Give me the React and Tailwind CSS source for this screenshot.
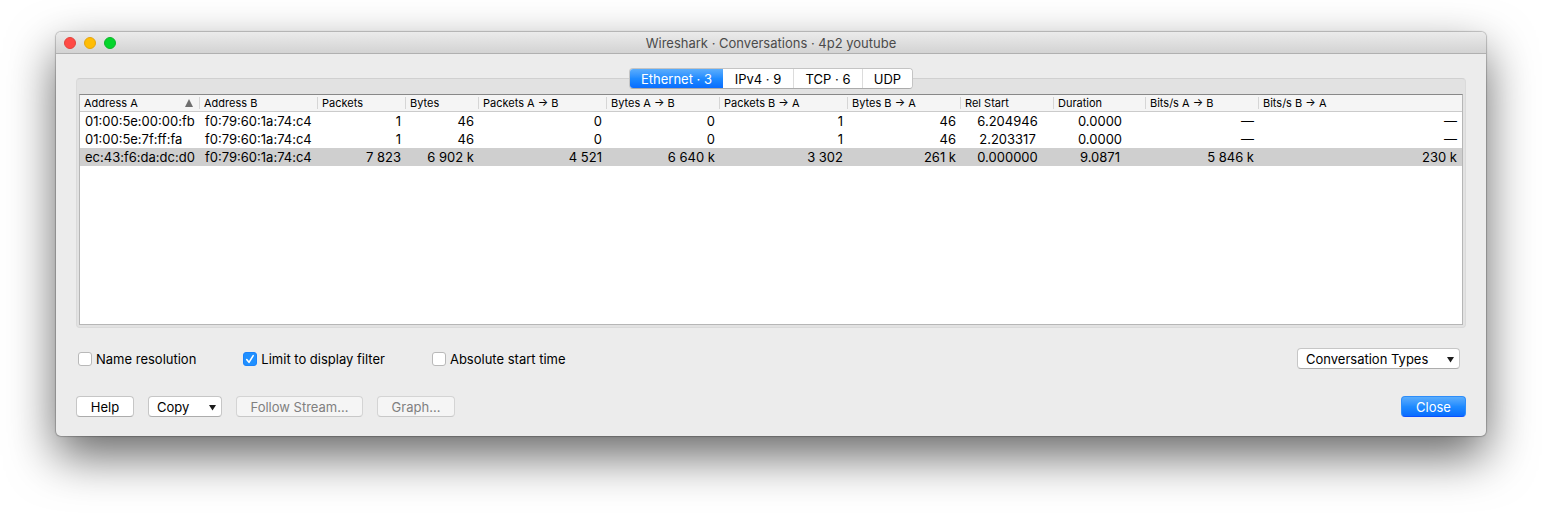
import React, { useState } from "react";

const COLUMNS = [
  { label: "Address A", width: "w-[120px]", align: "text-left" },
  { label: "Address B", width: "w-[118px]", align: "text-left" },
  { label: "Packets", width: "w-[88px]", align: "text-right" },
  { label: "Bytes", width: "w-[73px]", align: "text-right" },
  { label: "Packets A → B", width: "w-[128px]", align: "text-right" },
  { label: "Bytes A → B", width: "w-[113px]", align: "text-right" },
  { label: "Packets B → A", width: "w-[128px]", align: "text-right" },
  { label: "Bytes B → A", width: "w-[113px]", align: "text-right" },
  { label: "Rel Start", width: "w-[93px]", align: "text-center" },
  { label: "Duration", width: "w-[92px]", align: "text-center" },
  { label: "Bits/s A → B", width: "w-[113px]", align: "text-right" },
  { label: "Bits/s B → A", width: "", align: "text-right" },
];

const ROWS = [
  ["01:00:5e:00:00:fb", "f0:79:60:1a:74:c4", "1", "46", "0", "0", "1", "46", "6.204946", "0.0000", "—", "—"],
  ["01:00:5e:7f:ff:fa", "f0:79:60:1a:74:c4", "1", "46", "0", "0", "1", "46", "2.203317", "0.0000", "—", "—"],
  ["ec:43:f6:da:dc:d0", "f0:79:60:1a:74:c4", "7 823", "6 902 k", "4 521", "6 640 k", "3 302", "261 k", "0.000000", "9.0871", "5 846 k", "230 k"],
];

const TABS = [
  { label: "Ethernet · 3", width: "w-[93px]" },
  { label: "IPv4 · 9", width: "w-[70px]" },
  { label: "TCP · 6", width: "w-[69px]" },
  { label: "UDP", width: "w-[50px]" },
];

const BLUE = "bg-linear-to-b from-[#5aadfc] via-[#1f8bff] to-[#0a6cff] text-white";

function Tabs() {
  const [active, setActive] = useState(0);
  return (
    <div
      role="tablist"
      className="relative z-10 -mb-[11px] flex h-[21px] self-center overflow-hidden rounded-[4px] border border-[#c4c4c4] border-b-[#ababab] bg-white"
    >
      {TABS.map((tab, i) => (
        <button
          key={tab.label}
          role="tab"
          aria-selected={i === active}
          onClick={() => setActive(i)}
          className={`${tab.width} whitespace-nowrap ${i === active ? BLUE : "bg-white"} ${
            i > active + 1 ? "border-l border-[#dcdcdc]" : ""
          }`}
        >
          {tab.label}
        </button>
      ))}
    </div>
  );
}

function Conversations() {
  return (
    <table className="w-full table-fixed border-separate border-spacing-0">
      <thead>
        <tr className="h-[17px] bg-[#f5f5f5] text-[11px] leading-[14px]">
          {COLUMNS.map((c, i) => (
            <th key={c.label} scope="col" className={`${c.width} border-b border-[#cbcbcb] p-0 text-left font-normal`}>
              <div
                className={`flex h-3 items-center justify-between pl-1 ${
                  i < COLUMNS.length - 1 ? "border-r border-[#d6d6d6]" : ""
                }`}
              >
                <span className="whitespace-nowrap">{c.label}</span>
                {i === 0 && (
                  <svg className="mr-1.5 size-2" viewBox="0 0 8 8" fill="#6f6f6f" aria-hidden="true">
                    <path d="M4 0 8 8H0z" />
                  </svg>
                )}
              </div>
            </th>
          ))}
        </tr>
      </thead>
      <tbody>
        {ROWS.map((row, r) => (
          <tr key={row[0]} className={`h-[18px] leading-[18px] ${r === 2 ? "bg-[#cfcfcf]" : ""}`}>
            {row.map((cell, i) => (
              <td key={COLUMNS[i].label} className={`${COLUMNS[i].align} px-[5px] py-0 whitespace-nowrap`}>
                {cell}
              </td>
            ))}
          </tr>
        ))}
      </tbody>
    </table>
  );
}

function Check({ label, defaultChecked }) {
  return (
    <label className="flex items-center gap-1">
      <span className="grid">
        <input
          type="checkbox"
          defaultChecked={defaultChecked}
          className="peer col-start-1 row-start-1 size-3.5 appearance-none rounded-[3px] border border-[#b9b9b9] bg-white checked:border-[#1a82fb] checked:bg-[#2090ff]"
        />
        <svg
          viewBox="0 0 14 14"
          className="pointer-events-none invisible col-start-1 row-start-1 size-3.5 peer-checked:visible"
          fill="none"
          stroke="white"
          strokeWidth="1.6"
          strokeLinecap="round"
          strokeLinejoin="round"
          aria-hidden="true"
        >
          <path d="M3.7 7.6 6 10.3 10.2 3.6" />
        </svg>
      </span>
      {label}
    </label>
  );
}

function DropDown({ label, width }) {
  return (
    <span className={`grid items-center ${width}`}>
      <select
        aria-label={label}
        className="col-start-1 row-start-1 h-[21px] w-full appearance-none rounded-[4px] border border-[#c6c6c6] border-b-[#acacac] bg-white pl-2 leading-[18px]"
      >
        <option>{label}</option>
      </select>
      <svg
        viewBox="0 0 7 6"
        className="pointer-events-none col-start-1 row-start-1 mt-0.5 mr-1.5 h-1.5 w-[7px] justify-self-end"
        fill="#1c1c1c"
        aria-hidden="true"
      >
        <path d="M0 0H7L3.5 5.6z" />
      </svg>
    </span>
  );
}

function PushButton({ children, width, disabled }) {
  return (
    <button
      disabled={disabled}
      className={`${width} h-[21px] rounded-[4px] border border-[#c6c6c6] border-b-[#acacac] bg-white leading-[18px] whitespace-nowrap disabled:border-[#d4d4d4] disabled:border-b-[#c8c8c8] disabled:bg-[#f5f5f5] disabled:text-[#808080]`}
    >
      {children}
    </button>
  );
}

export default function App() {
  return (
    <main className="flex min-h-screen flex-col bg-white px-14 pt-8 pb-20 font-['Inter',sans-serif] text-[13px] leading-[18px] text-black">
      <section className="flex flex-1 flex-col rounded-[5px] bg-[#ececec] shadow-[0_0_1px_1px_rgba(0,0,0,0.22),0_20px_48px_rgba(0,0,0,0.6)]">
        <header className="grid h-[22px] grid-cols-[1fr_auto_1fr] items-center rounded-t-[5px] border-b border-[#b0b0b0] bg-linear-to-b from-[#ebebeb] to-[#d3d3d3]">
          <div className="flex gap-2 pl-2">
            <button aria-label="Close window" className="size-3 rounded-full border border-[#e2443d] bg-[#ff4a45]" />
            <button aria-label="Minimize window" className="size-3 rounded-full border border-[#e5a50f] bg-[#ffbd05]" />
            <button aria-label="Zoom window" className="size-3 rounded-full border border-[#0eb52a] bg-[#04d52c]" />
          </div>
          <h1 className="text-[#4b4b4b]">Wireshark · Conversations · 4p2 youtube</h1>
        </header>

        <div className="flex flex-1 flex-col px-5 pt-3.5 pb-[19px]">
          <Tabs />
          <div className="flex flex-1 flex-col rounded-[4px] border border-[#dadada] border-t-[#d0d0d0] bg-[#e2e2e2] px-0.5 pt-[15px] pb-0.5">
            <div className="flex-1 border border-[#b6b6b6] border-t-[#888888] bg-white">
              <Conversations />
            </div>
          </div>

          <div className="mt-5 flex items-center gap-[47px] pl-0.5">
            <Check label="Name resolution" />
            <Check label="Limit to display filter" defaultChecked />
            <Check label="Absolute start time" />
            <div className="mr-1.5 ml-auto">
              <DropDown label="Conversation Types" width="w-[163px]" />
            </div>
          </div>

          <div className="mt-[27px] flex items-center gap-3.5">
            <PushButton width="w-[58px]">Help</PushButton>
            <DropDown label="Copy" width="w-[74px]" />
            <PushButton width="w-[127px]" disabled>Follow Stream…</PushButton>
            <PushButton width="w-[78px]" disabled>Graph…</PushButton>
            <button className={`${BLUE} ml-auto h-[21px] w-[65px] rounded-[4px] border border-[#2d8dfa] border-b-[#0a50ff] leading-[18px]`}>
              Close
            </button>
          </div>
        </div>
      </section>
    </main>
  );
}
